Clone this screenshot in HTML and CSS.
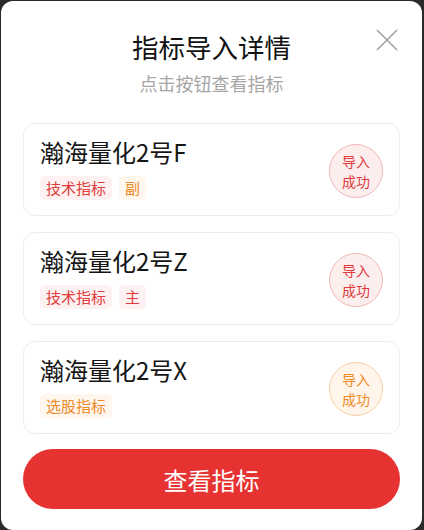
FILE: index.html
```html
<!DOCTYPE html>
<html lang="zh-CN">
<head>
    <meta charset="UTF-8">
    <meta name="viewport" content="width=device-width, initial-scale=1.0">
    <title>指标导入详情</title>
    <link rel="stylesheet" href="styles.css">
</head>
<body>
    <!-- 弹窗 -->
    <div class="modal">
        <button class="modal-close" title="关闭">
            <svg width="22" height="22" viewBox="0 0 22 22">
                <path d="M1 1 L21 21 M21 1 L1 21" stroke="#a0a0a0" stroke-width="1.6" fill="none"/>
            </svg>
        </button>

        <h2 class="modal-title">指标导入详情</h2>
        <p class="modal-subtitle">点击按钮查看指标</p>

        <!-- 指标列表 -->
        <div class="item-list">
            <div class="item">
                <div class="item-info">
                    <div class="item-name">瀚海量化2号F</div>
                    <div class="item-tags">
                        <span class="tag tag-red">技术指标</span>
                        <span class="tag tag-orange">副</span>
                    </div>
                </div>
                <div class="status status-red">导入<br>成功</div>
            </div>

            <div class="item">
                <div class="item-info">
                    <div class="item-name">瀚海量化2号Z</div>
                    <div class="item-tags">
                        <span class="tag tag-red">技术指标</span>
                        <span class="tag tag-red">主</span>
                    </div>
                </div>
                <div class="status status-red">导入<br>成功</div>
            </div>

            <div class="item">
                <div class="item-info">
                    <div class="item-name">瀚海量化2号X</div>
                    <div class="item-tags">
                        <span class="tag tag-orange">选股指标</span>
                    </div>
                </div>
                <div class="status status-orange">导入<br>成功</div>
            </div>
        </div>

        <button class="view-btn">查看指标</button>
    </div>
</body>
</html>
```

FILE: styles.css
```css
/* 전역 초기화 */
* {
    margin: 0;
    padding: 0;
    box-sizing: border-box;
}

body {
    font-family: "Noto Sans CJK SC", "Noto Sans", sans-serif;
    background: #2a2a2a;
    height: 530px;
    overflow: hidden;
}

/* 弹窗 */
.modal {
    position: relative;
    background: white;
    border-radius: 12px;
    margin: 1px 2px 0 1px;
    height: 529px;
    padding: 28px 22px 0;
    text-align: center;
}

.modal-close {
    position: absolute;
    top: 28px;
    right: 24px;
    width: 22px;
    height: 22px;
    border: none;
    background: none;
    line-height: 0;
}

.modal-title {
    font-size: 26.5px;
    line-height: 36px;
    font-weight: 400;
    color: #111;
}

.modal-subtitle {
    font-size: 18px;
    line-height: 24px;
    color: #a6a6a6;
    margin-top: 6px;
}

/* 指标列表 */
.item-list {
    margin-top: 28px;
    display: flex;
    flex-direction: column;
    gap: 16px;
}

.item {
    display: flex;
    align-items: center;
    justify-content: space-between;
    height: 93px;
    padding: 13px 16px 16px;
    border: 1px solid #ececec;
    border-radius: 12px;
    text-align: left;
}

.item-name {
    font-size: 24px;
    line-height: 30px;
    color: #151515;
}

.item-tags {
    display: flex;
    gap: 7px;
    margin-top: 9px;
}

.tag {
    font-size: 15px;
    line-height: 24px;
    padding: 0 6px;
    border-radius: 5px;
}

.tag-red {
    color: #e23b3b;
    background: #fdf1f1;
}

.tag-orange {
    color: #ec8a2c;
    background: #fff6ee;
}

/* 导入状态 */
.status {
    width: 54px;
    height: 54px;
    border-radius: 50%;
    font-size: 14px;
    line-height: 20px;
    text-align: center;
    padding-top: 6px;
    margin-top: 6px;
}

.status-red {
    color: #e0393e;
    background: #fdeeee;
    border: 1px solid #f1b7b7;
}

.status-orange {
    color: #ee8a26;
    background: #fff5ea;
    border: 1px solid #f7d0a6;
}

/* 查看指标 按钮 */
.view-btn {
    display: block;
    width: 100%;
    height: 60px;
    margin-top: 15px;
    border: none;
    border-radius: 30px;
    background: #e73232;
    color: white;
    font-family: inherit;
    font-size: 24px;
}
```
